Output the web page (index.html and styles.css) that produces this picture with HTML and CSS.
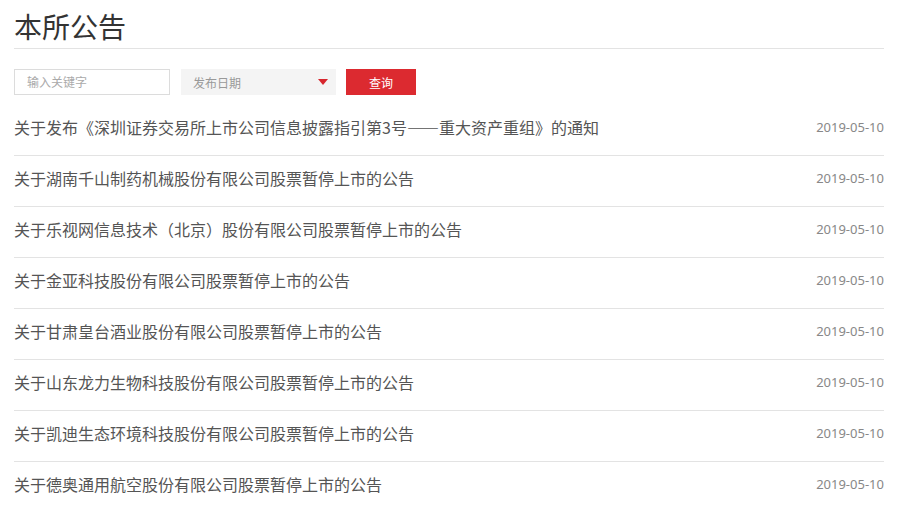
FILE: index.html
```html
<!DOCTYPE html>
<html lang="zh-CN">
<head>
<meta charset="utf-8">
<title>本所公告</title>
<link rel="stylesheet" href="styles.css">
</head>
<body>
<div class="page">
  <h1 class="title">本所公告</h1>
  <div class="filters">
    <div class="input">输入关键字</div>
    <div class="select"><span>发布日期</span><i class="caret"></i></div>
    <div class="btn">查询</div>
  </div>
  <ul class="list">
    <li><span class="t">关于发布《深圳证券交易所上市公司信息披露指引第3号——重大资产重组》的通知</span><span class="d">2019-05-10</span></li>
    <li><span class="t">关于湖南千山制药机械股份有限公司股票暂停上市的公告</span><span class="d">2019-05-10</span></li>
    <li><span class="t">关于乐视网信息技术（北京）股份有限公司股票暂停上市的公告</span><span class="d">2019-05-10</span></li>
    <li><span class="t">关于金亚科技股份有限公司股票暂停上市的公告</span><span class="d">2019-05-10</span></li>
    <li><span class="t">关于甘肃皇台酒业股份有限公司股票暂停上市的公告</span><span class="d">2019-05-10</span></li>
    <li><span class="t">关于山东龙力生物科技股份有限公司股票暂停上市的公告</span><span class="d">2019-05-10</span></li>
    <li><span class="t">关于凯迪生态环境科技股份有限公司股票暂停上市的公告</span><span class="d">2019-05-10</span></li>
    <li><span class="t">关于德奥通用航空股份有限公司股票暂停上市的公告</span><span class="d">2019-05-10</span></li>
  </ul>
</div>
</body>
</html>
```

FILE: styles.css
```css
* { box-sizing: border-box; margin: 0; padding: 0; }
html, body { background: #fff; }
body {
  font-family: "Microsoft YaHei", "Noto Sans CJK SC", "Noto Sans", sans-serif;
  color: #555;
  overflow: hidden;
}
.page {
  width: 870px;
  margin-left: 14px;
}
.title {
  font-size: 28px;
  font-weight: 400;
  color: #333;
  line-height: 40px;
  padding-top: 6px;
  height: 49px;
  border-bottom: 1px solid #e3e3e3;
}
.filters {
  display: flex;
  align-items: center;
  margin-top: 20px;
  height: 26px;
}
.input {
  width: 156px;
  height: 26px;
  border: 1px solid #dcdcdc;
  font-size: 12px;
  color: #aaa;
  line-height: 24px;
  padding-left: 12px;
}
.select {
  width: 155px;
  height: 26px;
  margin-left: 11px;
  background: #f4f4f4;
  font-size: 12px;
  color: #999;
  display: flex;
  align-items: center;
  justify-content: space-between;
  padding: 0 8px 0 12px;
}
.caret {
  width: 0; height: 0;
  border-left: 5px solid transparent;
  border-right: 5px solid transparent;
  border-top: 6px solid #d7262d;
}
.btn {
  width: 70px;
  height: 26px;
  margin-left: 10px;
  background: #dc2a30;
  color: #fff;
  font-size: 12px;
  display: flex;
  align-items: center;
  justify-content: center;
}
.list {
  list-style: none;
  margin-top: 10px;
}
.list li {
  display: flex;
  justify-content: space-between;
  align-items: center;
  height: 51px;
  padding-bottom: 7px;
  border-bottom: 1px solid #e3e3e3;
}
.list li:last-child { border-bottom: none; }
.t {
  font-size: 16px;
  color: #555;
  white-space: nowrap;
}
.d {
  font-size: 13px;
  color: #888;
  font-family: "Noto Sans", "Open Sans", sans-serif;
}
```
